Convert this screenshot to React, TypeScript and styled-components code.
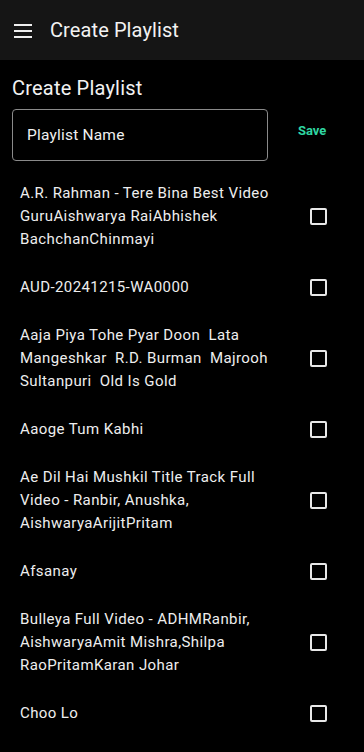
import React, { useState } from 'react';
import styled, { createGlobalStyle } from 'styled-components';

const GlobalStyle = createGlobalStyle`
  html, body {
    margin: 0;
    padding: 0;
    background: #000;
  }
  body {
    font-family: Roboto, "Noto Sans", sans-serif;
    color: #fff;
  }
`;

const Screen = styled.div`
  width: 364px;
  height: 752px;
  overflow: hidden;
  background: #000;
  display: flex;
  flex-direction: column;
`;

const TopBar = styled.header`
  height: 60px;
  flex-shrink: 0;
  background: #151515;
  display: flex;
  align-items: center;
  padding: 0 14px;
  gap: 18px;
`;

const MenuIcon = styled.svg`
  width: 18px;
  height: 14px;
  margin-top: 1px;
`;

const BarTitle = styled.h1`
  margin: 0;
  font-size: 20px;
  font-weight: 400;
  letter-spacing: 0.1px;
  color: #f2f2f2;
`;

const Content = styled.main`
  padding: 14px 12px 0;
  display: flex;
  flex-direction: column;
`;

const Heading = styled.h2`
  margin: 0;
  font-size: 20px;
  font-weight: 400;
  line-height: 28px;
  letter-spacing: 0.2px;
  color: #f2f2f2;
`;

const FormRow = styled.div`
  display: flex;
  align-items: flex-start;
  margin-top: 7px;
`;

const NameInput = styled.input`
  width: 256px;
  height: 52px;
  box-sizing: border-box;
  background: transparent;
  border: 1px solid #8a8a8a;
  border-radius: 4px;
  padding: 0 14px;
  font-family: inherit;
  font-size: 15.5px;
  letter-spacing: 0.2px;
  color: #fff;
  outline: none;
  &::placeholder {
    color: #f0f0f0;
  }
`;

const SaveButton = styled.button`
  background: none;
  border: none;
  margin: 14px 0 0 30px;
  padding: 0;
  font-family: inherit;
  font-size: 13px;
  font-weight: 700;
  color: #2fd6a2;
  cursor: pointer;
`;

const SongList = styled.ul`
  list-style: none;
  margin: 9px 0 0;
  padding: 0;
`;

const SongRow = styled.li`
  display: flex;
  align-items: center;
  justify-content: space-between;
  padding: 12px 25px 13px 8px;
`;

const SongName = styled.span`
  font-size: 15px;
  line-height: 23px;
  letter-spacing: 0.4px;
  color: #eeeeee;
  max-width: 258px;
`;

const Box = styled.span<{ $checked: boolean }>`
  width: 17px;
  height: 17px;
  box-sizing: border-box;
  flex-shrink: 0;
  border: 2px solid #e8e8e8;
  border-radius: 2px;
  background: ${(p) => (p.$checked ? '#2fd6a2' : 'transparent')};
  cursor: pointer;
`;

const songs = [
  'A.R. Rahman - Tere Bina Best Video GuruAishwarya RaiAbhishek BachchanChinmayi',
  'AUD-20241215-WA0000',
  'Aaja Piya Tohe Pyar Doon\u00a0 Lata Mangeshkar\u00a0 R.D. Burman\u00a0 Majrooh Sultanpuri\u00a0 Old Is Gold',
  'Aaoge Tum Kabhi',
  'Ae Dil Hai Mushkil Title Track Full Video - Ranbir, Anushka, AishwaryaArijitPritam',
  'Afsanay',
  'Bulleya Full Video - ADHMRanbir, AishwaryaAmit Mishra,Shilpa RaoPritamKaran Johar',
  'Choo Lo',
];

const App: React.FC = () => {
  const [checked, setChecked] = useState<boolean[]>(songs.map(() => false));

  const toggle = (i: number): void =>
    setChecked(checked.map((c, j) => (j === i ? !c : c)));

  return (
    <Screen>
      <GlobalStyle />
      <TopBar>
        <MenuIcon viewBox="0 0 18 14">
          <rect x="0" y="0" width="18" height="2" fill="#eee" />
          <rect x="0" y="6" width="18" height="2" fill="#eee" />
          <rect x="0" y="12" width="18" height="2" fill="#eee" />
        </MenuIcon>
        <BarTitle>Create Playlist</BarTitle>
      </TopBar>
      <Content>
        <Heading>Create Playlist</Heading>
        <FormRow>
          <NameInput placeholder="Playlist Name" />
          <SaveButton>Save</SaveButton>
        </FormRow>
        <SongList>
          {songs.map((s, i) => (
            <SongRow key={s}>
              <SongName>{s}</SongName>
              <Box $checked={checked[i]} onClick={(): void => toggle(i)} />
            </SongRow>
          ))}
        </SongList>
      </Content>
    </Screen>
  );
};

export default App;
